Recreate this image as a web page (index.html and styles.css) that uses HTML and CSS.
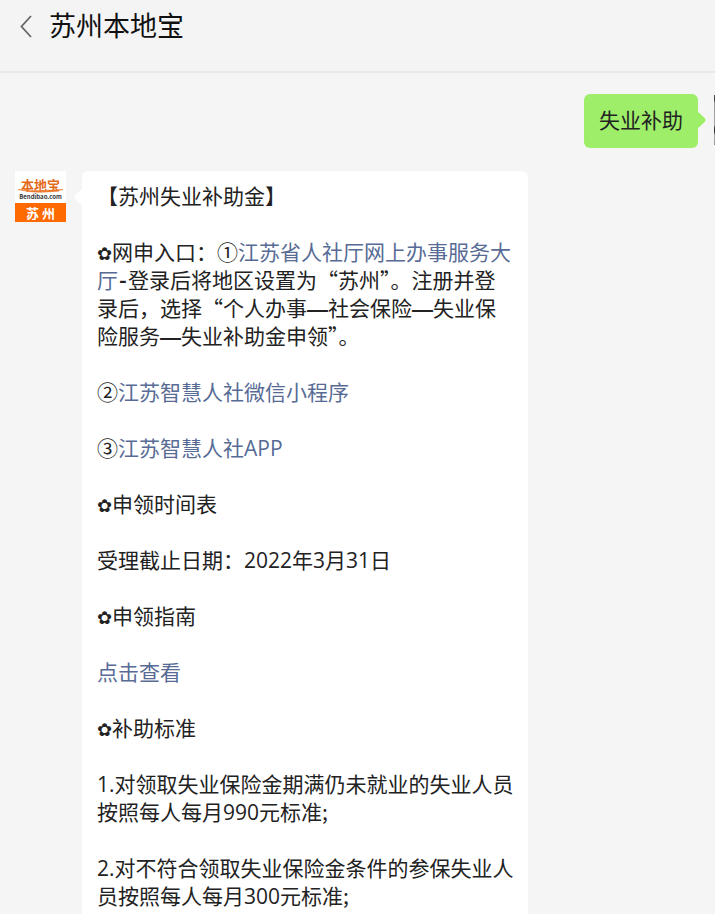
FILE: index.html
```html
<!DOCTYPE html>
<html lang="zh-CN">
<head>
  <meta charset="UTF-8" />
  <meta name="viewport" content="width=device-width, initial-scale=1.0" />
  <title>苏州本地宝</title>
  <link rel="stylesheet" href="styles.css">
</head>
<body>
  <header class="topbar">
    <svg class="back" width="14" height="24" viewBox="0 0 14 24">
      <path d="M12 2 L2.5 12.5 L12 23" fill="none" stroke="#666" stroke-width="1.8" />
    </svg>
    <span class="topbar-title">苏州本地宝</span>
  </header>

  <main class="chat">
    <div class="msg msg-me">
      <div class="bubble-me">失业补助</div>
      <div class="avatar-me"></div>
    </div>

    <div class="msg msg-bot">
      <div class="logo">
        <div class="logo-top">
          <span class="logo-name">本地宝</span>
          <svg class="logo-swoosh" width="47" height="5" viewBox="0 0 47 5">
            <path d="M1 0.5 Q23 6 46 0.5 Q23 3 1 0.5 Z" fill="#f0792b" stroke="#f0792b" stroke-width="0.6" />
          </svg>
          <span class="logo-url">Bendibao.com</span>
        </div>
        <div class="logo-city">苏 州</div>
      </div>
      <div class="bubble-bot">
        <p>【苏州失业补助金】</p>
        <p><span class="flower">✿</span>网申入口：①<a href="#">江苏省人社厅网上办事服务大厅</a><span class="hyphen">-</span>登录后将地区设置为“苏州”。注册并登录后，选择“个人办事<b class="dash">—</b>社会保险<b class="dash">—</b>失业保险服务<b class="dash">—</b>失业补助金申领”。</p>
        <p>②<a href="#">江苏智慧人社微信小程序</a></p>
        <p>③<a href="#">江苏智慧人社<span class="num">APP</span></a></p>
        <p><span class="flower">✿</span>申领时间表</p>
        <p>受理截止日期：<span class="num">2022</span>年<span class="num">3</span>月<span class="num">31</span>日</p>
        <p><span class="flower">✿</span>申领指南</p>
        <p><a href="#">点击查看</a></p>
        <p><span class="flower">✿</span>补助标准</p>
        <p><span class="num">1.</span>对领取失业保险金期满仍未就业的失业人员按照每人每月<span class="num">990</span>元标准;</p>
        <p><span class="num">2.</span>对不符合领取失业保险金条件的参保失业人员按照每人每月<span class="num">300</span>元标准;</p>
      </div>
    </div>
  </main>
</body>
</html>
```

FILE: styles.css
```css
html, body {
  margin: 0;
  height: 914px;
  overflow: hidden;
}
body {
  font-family: "Noto Sans CJK SC", "Liberation Sans", sans-serif;
  background: #f5f5f5;
  color: #222;
}
.topbar {
  height: 71px;
  box-sizing: content-box;
  border-bottom: 2px solid #e8e8e8;
  padding-left: 19px;
  display: flex;
  align-items: flex-start;
  gap: 16px;
  background: #f4f4f4;
}
.back {
  margin-top: 14px;
}
.topbar-title {
  font-size: 27px;
  line-height: 50px;
  color: #111;
}
.chat {
  padding-top: 21px;
}
.msg {
  display: flex;
  align-items: flex-start;
}
.msg-me {
  justify-content: flex-end;
  margin-right: -50px;
  gap: 16px;
}
.bubble-me {
  position: relative;
  background: #9eee6a;
  border-radius: 6px;
  padding: 0 15px;
  height: 54px;
  line-height: 50px;
  font-size: 21px;
  color: #222;
}
.bubble-me::after {
  content: "";
  position: absolute;
  right: -6px;
  top: 20px;
  width: 12px;
  height: 12px;
  background: #9eee6a;
  transform: rotate(45deg);
  border-radius: 2px;
}
.avatar-me {
  width: 51px;
  height: 50px;
  margin-top: 1px;
  background: linear-gradient(#444 0, #444 10%, #999 16%, #a5a5a5 60%, #333 66%, #333 74%, #aaa 80%, #999 100%);
  flex-shrink: 0;
}
.msg-bot {
  margin-top: 23px;
  padding-left: 15px;
  gap: 16px;
}
.logo {
  width: 51px;
  height: 51px;
  flex-shrink: 0;
  background: #fff;
  display: flex;
  flex-direction: column;
}
.logo-top {
  height: 32px;
  display: flex;
  flex-direction: column;
  align-items: center;
  padding-top: 7px;
  box-sizing: border-box;
}
.logo-name {
  font-size: 13px;
  line-height: 13px;
  font-weight: bold;
  color: #e56a1a;
}
.logo-swoosh {
  margin-top: -2px;
}
.logo-url {
  font-size: 6px;
  line-height: 6px;
  font-weight: bold;
  color: #333;
}
.logo-city {
  height: 19px;
  background: #ff6a00;
  color: #fff;
  font-size: 13px;
  line-height: 19px;
  font-weight: bold;
  text-align: center;
}
.bubble-bot {
  position: relative;
  width: 417px;
  padding: 10px 14px 12px 15px;
  background: #fff;
  border-radius: 6px;
  font-size: 21px;
  line-height: 28px;
  color: #222;
}
.bubble-bot::before {
  content: "";
  position: absolute;
  left: -6px;
  top: 20px;
  width: 12px;
  height: 12px;
  background: #fff;
  transform: rotate(45deg);
  border-radius: 2px;
}
.bubble-bot p {
  margin: 0 0 28px;
}
.bubble-bot a {
  color: #576b95;
  text-decoration: none;
}
.flower {
  display: inline-block;
  width: 15px;
  font-family: "DejaVu Sans", sans-serif;
  font-size: 18px;
  font-weight: bold;
  line-height: 0;
}
.num {
  font-family: "Open Sans", sans-serif;
  line-height: 0;
}
.hyphen {
  display: inline-block;
  width: 10px;
  text-align: center;
  font-weight: bold;
  line-height: 0;
}
.dash {
  font-family: "Liberation Sans", sans-serif;
  line-height: 0;
}
```
